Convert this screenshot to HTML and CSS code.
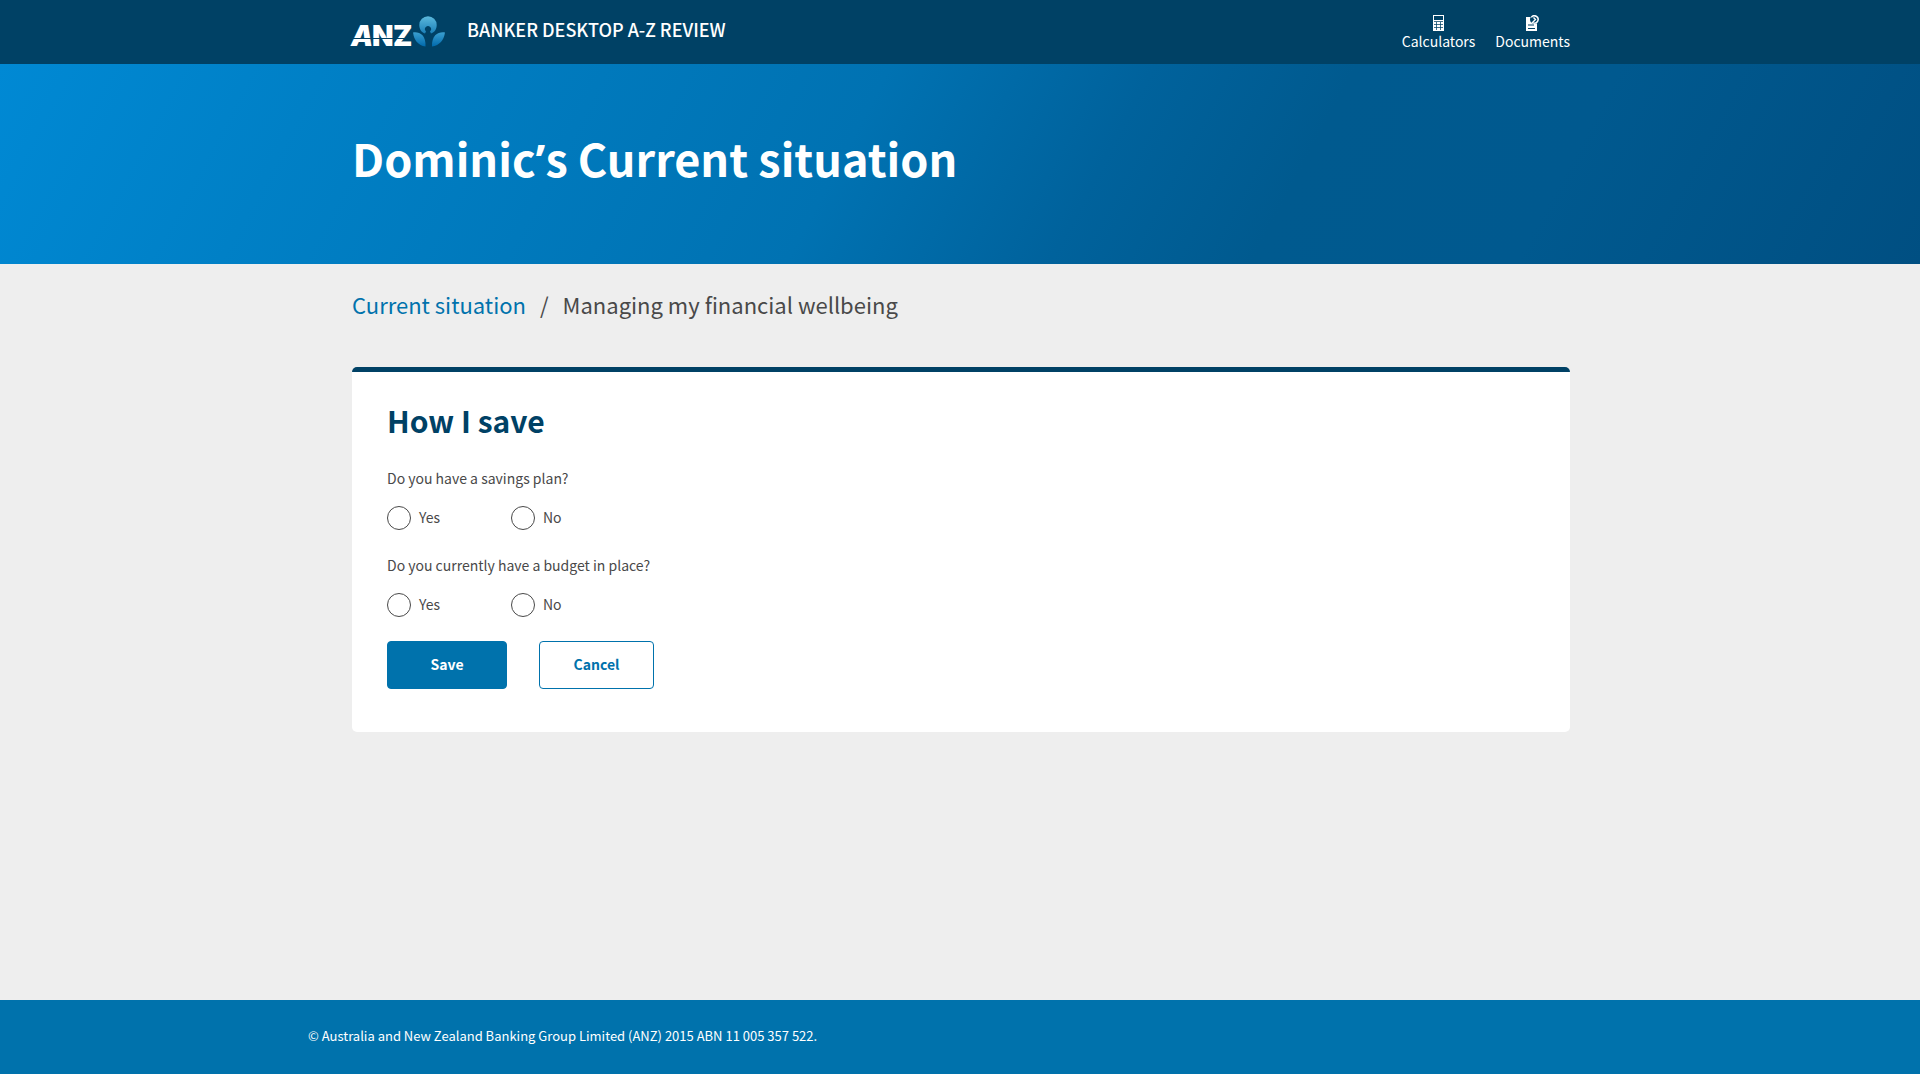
FILE: index.html
```
<!DOCTYPE html>
<html lang="en">
<head>
<meta charset="utf-8">
<title>Managing my financial wellbeing</title>
<link rel="stylesheet" href="styles.css">
</head>
<body>
<header class="topbar">
  <div class="container topbar-inner">
    <a class="brand" href="#" aria-label="ANZ home">
      <svg class="logo" viewBox="-6 0 106 44" width="106" height="44" role="img" aria-label="ANZ">
        <defs>
          <linearGradient id="head" x1="0" y1="0" x2="0" y2="1">
            <stop offset="0" stop-color="#5bb8dc"/><stop offset="1" stop-color="#1a7fb8"/>
          </linearGradient>
          <linearGradient id="petal" x1="0" y1="0" x2="0" y2="1">
            <stop offset="0" stop-color="#3a9fd0"/><stop offset="1" stop-color="#0069ac"/>
          </linearGradient>
        </defs>
        <text class="wordmark" y="32"><tspan class="slant" x="1">A</tspan><tspan x="22">N</tspan><tspan x="43">Z</tspan></text>
        <path d="M2 24.500H56" stroke="#004165" stroke-width="1"/>
        <path d="M75 19.500C71.500 18.500 69.300 15 69.300 11A8.700 8.700 0 0 1 86.700 11C86.700 15 84.500 18.500 81 19.500L80 17.400A3 3 0 1 0 76 17.400Z" fill="url(#head)"/>
        <path d="M63 18.500C69 17.500 76 20.500 75.500 32.500C68 31.500 64 26 63 18.500Z" fill="url(#petal)"/>
        <path d="M95 18.500C89 17.500 81.500 20.500 82 32.500C89.500 31.500 94 26 95 18.500Z" fill="url(#petal)"/>
      </svg>
      <span class="brand-name">BANKER DESKTOP A-Z REVIEW</span>
    </a>
    <nav class="tools" aria-label="Tools">
      <a class="tool" href="#">
        <svg width="11" height="16" viewBox="0 0 11 16" aria-hidden="true"><path fill="#fff" fill-rule="evenodd" d="M0 0H11V16H0ZM1 1V5H10V1Z"/><path d="M3.500 7V15M7.500 7V15M1 6.500H10M1 9.500H10M1 12.500H10" stroke="#004165" stroke-width="1" stroke-opacity=".75"/></svg>
        Calculators
      </a>
      <a class="tool" href="#">
        <svg width="13" height="16" viewBox="0 0 13 16" aria-hidden="true">
          <path fill="#fff" d="M0 2H6V8H11V16H0Z"/>
          <path d="M2 10H8M2 13.500H9" stroke="#004165" stroke-width="1.200"/>
          <circle cx="8.500" cy="4.500" r="4.500" fill="#004165"/>
          <path d="M5.300 2.400A3.700 3.700 0 1 1 7 7.900" fill="none" stroke="#fff" stroke-width="1.500"/>
          <path d="M7.500 2.500L9.500 4.500L5.500 8.500" fill="none" stroke="#fff" stroke-width="1.400"/>
        </svg>
        Documents
      </a>
    </nav>
  </div>
</header>
<section class="hero">
  <div class="container"><h1>Dominic<span class="apostrophe">’</span>s Current situation</h1></div>
</section>
<main class="container main">
  <nav class="crumbs" aria-label="Breadcrumb">
    <a href="#">Current situation</a><span aria-hidden="true">/</span><span>Managing my financial wellbeing</span>
  </nav>
  <form class="card">
    <h2>How I save</h2>
    <fieldset>
      <legend>Do you have a savings plan?</legend>
      <div class="options">
        <label><input type="radio" name="plan">Yes</label>
        <label><input type="radio" name="plan">No</label>
      </div>
    </fieldset>
    <fieldset>
      <legend>Do you currently have a budget in place?</legend>
      <div class="options">
        <label><input type="radio" name="budget">Yes</label>
        <label><input type="radio" name="budget">No</label>
      </div>
    </fieldset>
    <div class="actions">
      <button class="btn save" type="button">Save</button>
      <button class="btn cancel" type="button">Cancel</button>
    </div>
  </form>
</main>
<footer class="footer">
  <p>© Australia and New Zealand Banking Group Limited (ANZ) 2015 ABN 11 005 357 522.</p>
</footer>
</body>
</html>
```
FILE: styles.css
```
* { box-sizing: border-box; }

body {
  margin: 0;
  min-height: 100vh;
  display: flex;
  flex-direction: column;
  background: #eee;
  color: #494949;
  font: 14px/24px "Noto Sans CJK SC", "Open Sans", sans-serif;
}

a { color: #0072ac; text-decoration: none; }
h1, h2, p { margin: 0; }

.container {
  width: 100%;
  max-width: 1250px;
  margin: 0 auto;
  padding: 0 15px 0 17px;
}

.topbar { background: #004165; }
.topbar-inner {
  display: flex;
  justify-content: space-between;
  min-height: 64px;
}
.brand { display: flex; color: #fff; }
.logo { display: block; margin: 14px 0 0 -8px; }
.wordmark { font: 900 28px Inter, sans-serif; fill: #fff; }
.slant { font-style: italic; }
.brand-name {
  margin: 17px 0 0 17px;
  font-size: 18px;
  font-weight: 500;
}
.tools { display: flex; gap: 20px; }
.tool {
  display: flex;
  flex-direction: column;
  align-items: center;
  padding-top: 15px;
  line-height: 20px;
  color: #fff;
}

.hero {
  padding: 62px 0 74px;
  background: linear-gradient(118deg, #0089d4 0%, #0080c6 16%, #0072b2 44%, #00629c 57%, #005a8f 67%, #00598f 80%, #004f82 100%);
}
h1 {
  color: #fff;
  font-size: 45px;
  font-weight: 700;
  line-height: 64px;
}
.apostrophe { font-family: "Open Sans", sans-serif; line-height: 1; }

.main { flex: 1; padding-top: 24px; padding-bottom: 48px; }
.crumbs {
  display: flex;
  flex-wrap: wrap;
  gap: 14px;
  margin-bottom: 47px;
  font-size: 22px;
  line-height: 32px;
}

.card {
  padding: 28px 35px 43px;
  background: #fff;
  border-top: 5px solid #004165;
  border-radius: 5px;
}
h2 {
  margin-bottom: 26px;
  color: #004165;
  font-size: 30px;
  font-weight: 700;
  line-height: 40px;
}
fieldset { margin: 0 0 23px; padding: 0; border: 0; }
legend { padding: 0; }
.options { display: flex; padding-top: 16px; }
.options label {
  display: flex;
  gap: 8px;
  width: 124px;
  line-height: 22px;
}
input[type="radio"] {
  appearance: none;
  width: 24px;
  height: 24px;
  margin: 0;
  border: 1px solid #494949;
  border-radius: 50%;
  background: #fff;
}
input[type="radio"]:checked { background: #0072ac; box-shadow: inset 0 0 0 5px #fff; }

.actions { display: flex; gap: 32px; padding-top: 1px; }
.btn {
  height: 48px;
  padding: 0 0 2px;
  border: 1px solid #0072ac;
  border-radius: 4px;
  font: inherit;
  font-weight: 700;
  cursor: pointer;
}
.save { width: 120px; background: #0072ac; color: #fff; }
.cancel { width: 115px; background: #fff; color: #0072ac; }

.footer {
  padding: 24px calc(50% - 652px) 26px;
  background: #0072ac;
  color: #fff;
  font-size: 13px;
}
```
